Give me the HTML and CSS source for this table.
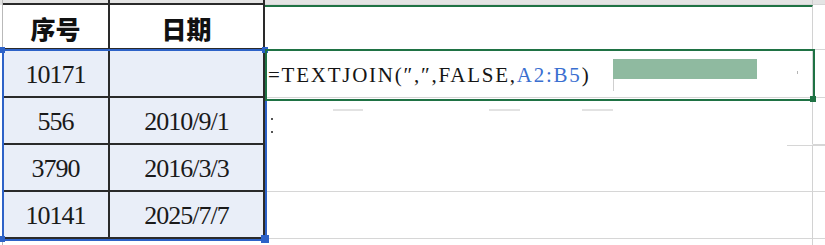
FILE: index.html
```html
<!DOCTYPE html>
<html lang="zh">
<head>
<meta charset="utf-8">
<link rel="stylesheet" href="styles.css">
</head>
<body>
<div class="sheet">
  <div class="gut top"></div><div class="cell top a"></div><div class="cell top b"></div><div class="cell top c"></div><div class="cell top d"></div>

  <div class="gut"></div>
  <div class="cell a head"><span>序号</span></div>
  <div class="cell b head"><span>日期</span></div>
  <div class="cell c c1"></div>
  <div class="cell d"></div>

  <div class="gut"></div>
  <div class="cell a sel num"><span>10171</span></div>
  <div class="cell b sel num"></div>
  <div class="cell c formula">=TEXTJOIN(″,″,FALSE,<span class="ref">A2:B5</span>)</div>
  <div class="cell d"></div>

  <div class="gut"></div>
  <div class="cell a sel num"><span>556</span></div>
  <div class="cell b sel num"><span>2010/9/1</span></div>
  <div class="cell c nob"></div>
  <div class="cell d"></div>

  <div class="gut"></div>
  <div class="cell a sel num"><span>3790</span></div>
  <div class="cell b sel num"><span>2016/3/3</span></div>
  <div class="cell c"></div>
  <div class="cell d"></div>

  <div class="gut"></div>
  <div class="cell a sel num last"><span>10141</span></div>
  <div class="cell b sel num last"><span>2025/7/7</span></div>
  <div class="cell c"></div>
  <div class="cell d"></div>

  <div class="gut"></div><div class="cell a foot"></div><div class="cell b foot"></div><div class="cell c foot"></div><div class="cell d foot"></div>

  <div class="range"></div>
  <div class="hd hd-tl"></div>
  <div class="hd hd-tr"></div>
  <div class="hd hd-bl"></div>
  <div class="hd hd-br"></div>
  <div class="active"></div>
  <div class="ghd"></div>
  <div class="ime"></div>
  <div class="caret"></div>
  <div class="dot"></div>
  <div class="dash dash1"></div>
  <div class="dash dash2"></div>
  <div class="dash dash3"></div>
  <div class="bullet b1"></div>
  <div class="bullet b2"></div>
  <div class="seg"></div>
</div>
</body>
</html>
```
FILE: styles.css
```css
html, body {
  margin: 0;
  padding: 0;
  background: #ffffff;
}
.sheet {
  position: relative;
  width: 825px;
  height: 245px;
  overflow: hidden;
  display: grid;
  grid-template-columns: 3px 107px 155px 548px 12px;
  grid-template-rows: 5px 45px 48px 47px 47px 47px 6px;
}
.gut {
  border-right: 1px solid #b9b9b9;
  box-sizing: border-box;
}
.gut.top { background: #e4e4e4; }
.cell {
  box-sizing: border-box;
  display: flex;
  align-items: center;
  justify-content: center;
  overflow: hidden;
}
.cell.top {
  background: #e4e4e4;
  border-bottom: 1px solid #cfcfcf;
}
.cell.top.a, .cell.top.b { border-right: 2px solid #2a2a2a; }
.cell.top.c { border-right: 1px solid #cfcfcf; }
.cell.a, .cell.b {
  border-right: 2px solid #2a2a2a;
  border-bottom: 2px solid #2a2a2a;
}
.cell.c {
  border-right: 1px solid #d2d2d2;
  border-bottom: 1px solid #d6d6d6;
}
.cell.c.nob { border-bottom-color: transparent; }
.cell.d { border-bottom: 1px solid #d6d6d6; }
.cell.foot { border: none; }
.cell.foot.a, .cell.foot.b { border-right: none; }
.cell.foot.c { border-right: 1px solid #d2d2d2; }
.c1 { border-top: 2px solid #1f7244; }
.head span {
  font-family: "Noto Sans CJK SC", sans-serif;
  font-weight: 900;
  font-size: 25px;
  line-height: 1;
  color: #111111;
  padding-top: 3px;
}
.sel { background: #e9eef8; }
.num span {
  font-family: "Liberation Serif", serif;
  font-size: 26px;
  letter-spacing: -1px;
  color: #1a1a1a;
  padding-top: 3px;
}
.formula {
  justify-content: flex-start;
  padding-left: 3px;
  padding-top: 3px;
  font-family: "Liberation Serif", serif;
  font-size: 21px;
  letter-spacing: 1.75px;
  color: #151515;
  white-space: nowrap;
}
.formula .ref { color: #3a6fd0; }
.range {
  position: absolute;
  left: 2px;
  top: 49px;
  width: 265px;
  height: 192px;
  box-sizing: border-box;
  border: 2px solid #2d62c8;
}
.hd {
  position: absolute;
  width: 6px;
  height: 6px;
  background: #2d62c8;
}
.hd-tl { left: 0; top: 47px; width: 5px; }
.hd-tr { left: 262px; top: 47px; }
.hd-bl { left: 0; top: 236px; width: 5px; }
.hd-br { left: 261px; top: 235px; width: 8px; height: 8px; }
.active {
  position: absolute;
  left: 265px;
  top: 49px;
  width: 550px;
  height: 52px;
  box-sizing: border-box;
  border: 2px solid #1f7244;
}
.ghd {
  position: absolute;
  left: 810px;
  top: 96px;
  width: 6px;
  height: 6px;
  background: #1f7244;
}
.ime {
  position: absolute;
  left: 613px;
  top: 59px;
  width: 144px;
  height: 20px;
  background: #8fbaa0;
}
.caret {
  position: absolute;
  left: 613px;
  top: 79px;
  width: 1px;
  height: 12px;
  background: #cfcfcf;
}
.dot {
  position: absolute;
  left: 797px;
  top: 71px;
  width: 1px;
  height: 3px;
  background: #b5b5b5;
}
.dash {
  position: absolute;
  top: 109px;
  height: 2px;
  background: #e2e2e2;
}
.dash1 { left: 333px; width: 30px; }
.dash2 { left: 489px; width: 31px; }
.dash3 { left: 582px; width: 31px; }
.bullet {
  position: absolute;
  left: 271px;
  width: 2px;
  height: 2px;
  background: #555;
}
.b1 { top: 118px; }
.b2 { top: 131px; }
.seg {
  position: absolute;
  left: 787px;
  top: 145px;
  width: 38px;
  height: 1px;
  background: #d6d6d6;
}
```
